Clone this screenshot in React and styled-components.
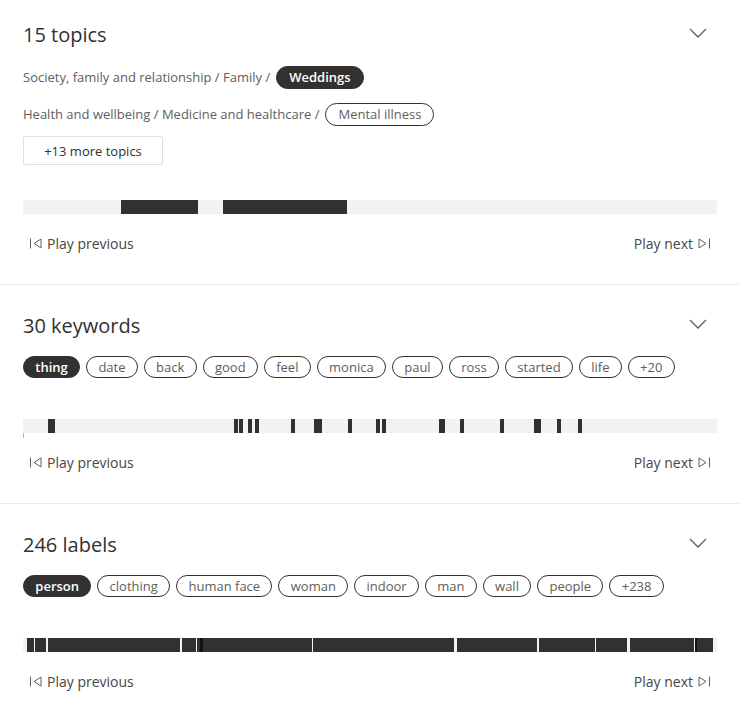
import React from "react";
import styled, { createGlobalStyle } from "styled-components";

const Global = createGlobalStyle`
  html, body { margin: 0; padding: 0; background: #fff; }
  body { font-family: "Open Sans", "Noto Sans", sans-serif; color: #323130; }
  * { box-sizing: border-box; }
`;

const Page = styled.div`
  width: 739px;
  display: flex;
  flex-direction: column;
`;

const Section = styled.section`
  padding: ${(p) => (p.$first ? "21px" : "27px")} 22px 26px 23px;
  border-top: ${(p) => (p.$first ? "none" : "1px solid #edebe9")};
  display: flex;
  flex-direction: column;
`;

const Header = styled.div`
  display: flex;
  align-items: center;
  justify-content: space-between;
  height: 28px;
`;

const Title = styled.h2`
  margin: 0;
  font-size: 20px;
  line-height: 28px;
  font-weight: 500;
  color: #323130;
`;

const ChevronButton = styled.button`
  border: none;
  background: none;
  padding: 0 0 4px;
  width: 28px;
  height: 28px;
  display: flex;
  align-items: center;
  justify-content: center;
  margin-right: 5px;
  cursor: pointer;
`;

const Crumb = styled.div`
  display: flex;
  align-items: center;
  gap: 6px;
  height: 24px;
  margin-top: ${(p) => p.$mt}px;
  font-size: 13px;
  color: #605e5c;
  white-space: nowrap;
`;

const ChipRow = styled.div`
  display: flex;
  gap: 6px;
  margin-top: 16px;
  height: 22px;
`;

const Chip = styled.span`
  display: inline-flex;
  align-items: center;
  justify-content: center;
  height: ${(p) => (p.$tall ? 23 : 22)}px;
  padding: 0 ${(p) => (p.$tall ? 12 : 11.3)}px;
  border-radius: 12px;
  font-size: 13px;
  border: 1px solid #323130;
  background: ${(p) => (p.$active ? "#323130" : "#fff")};
  color: ${(p) => (p.$active ? "#fff" : "#605e5c")};
  font-weight: ${(p) => (p.$active ? 600 : 400)};
  white-space: nowrap;
`;

const MoreButton = styled.button`
  margin-top: 10px;
  align-self: flex-start;
  width: 140px;
  height: 29px;
  border: 1px solid #e1dfdd;
  border-radius: 2px;
  background: #fff;
  font-family: inherit;
  font-size: 13px;
  color: #323130;
  padding: 0;
`;

const Track = styled.div`
  position: relative;
  height: 14px;
  background: #f3f2f1;
  margin-top: ${(p) => p.$mt}px;
`;

const Segment = styled.div`
  position: absolute;
  top: 0;
  bottom: 0;
  background: ${(p) => (p.$dark ? "#111" : "#323130")};
`;

const Cursor = styled.div`
  position: absolute;
  left: 0;
  top: 14px;
  width: 1px;
  height: 5px;
  background: #8fbfe8;
`;

const Controls = styled.div`
  display: flex;
  justify-content: space-between;
  align-items: center;
  margin-top: 14px;
  height: 30px;
`;

const PlayButton = styled.button`
  display: flex;
  align-items: center;
  gap: 5px;
  border: none;
  background: none;
  padding: 0 7px;
  height: 30px;
  font-family: inherit;
  font-size: 14px;
  color: #484644;
  cursor: pointer;
`;

const Chevron = () => (
  <svg width="18" height="10" viewBox="0 0 18 10">
    <polyline points="1,1 9,9 17,1" fill="none" stroke="#605e5c" strokeWidth="1.3" />
  </svg>
);

const PrevIcon = () => (
  <svg width="12" height="11" viewBox="0 0 12 11">
    <line x1="0.5" y1="0.5" x2="0.5" y2="10.5" stroke="#605e5c" strokeWidth="1" />
    <polygon points="11,1 11,10 4,5.5" fill="none" stroke="#605e5c" strokeWidth="1" />
  </svg>
);

const NextIcon = () => (
  <svg width="12" height="11" viewBox="0 0 12 11">
    <polygon points="1,1 1,10 8,5.5" fill="none" stroke="#605e5c" strokeWidth="1" />
    <line x1="11.5" y1="0.5" x2="11.5" y2="10.5" stroke="#605e5c" strokeWidth="1" />
  </svg>
);

const TRACK_W = 694;
const OFFSET = 23;

const Timeline = ({ segments, mt, cursor }) => (
  <Track $mt={mt}>
    {segments.map(([a, b, d], i) => (
      <Segment
        key={i}
        $dark={d}
        style={{ left: `${((a - OFFSET) / TRACK_W) * 100}%`, width: `${((b - a) / TRACK_W) * 100}%` }}
      />
    ))}
    {cursor && <Cursor />}
  </Track>
);

const PlayControls = () => (
  <Controls>
    <PlayButton>
      <PrevIcon />
      Play previous
    </PlayButton>
    <PlayButton>
      Play next
      <NextIcon />
    </PlayButton>
  </Controls>
);

const topicSegs = [
  [121, 198],
  [223, 347],
];

const keywordSegs = [
  [48, 55],
  [234, 238],
  [239, 243],
  [248, 252],
  [255, 259],
  [291, 295],
  [314, 322],
  [348, 352],
  [376, 380],
  [382, 386],
  [439, 445],
  [460, 464],
  [500, 504],
  [534, 541],
  [557, 561],
  [578, 582],
];

const labelSegs = [
  [27, 34],
  [35, 46],
  [48, 180],
  [182, 196],
  [197, 200],
  [200, 203, true],
  [203, 312],
  [313, 454],
  [457, 537],
  [539, 595],
  [596, 627],
  [630, 694],
  [695, 697, true],
  [697, 713],
];

const keywords = ["date", "back", "good", "feel", "monica", "paul", "ross", "started", "life", "+20"];
const labels = ["clothing", "human face", "woman", "indoor", "man", "wall", "people", "+238"];

const SectionHeader = ({ title }) => (
  <Header>
    <Title>{title}</Title>
    <ChevronButton aria-label="expand">
      <Chevron />
    </ChevronButton>
  </Header>
);

export default function App() {
  return (
    <>
      <Global />
      <Page>
        <Section $first>
          <SectionHeader title="15 topics" />
          <Crumb $mt={16}>
            Society, family and relationship / Family /<Chip $active $tall>Weddings</Chip>
          </Crumb>
          <Crumb $mt={13}>
            Health and wellbeing / Medicine and healthcare /<Chip $tall>Mental illness</Chip>
          </Crumb>
          <MoreButton>+13 more topics</MoreButton>
          <Timeline segments={topicSegs} mt={35} />
          <PlayControls />
        </Section>
        <Section>
          <SectionHeader title="30 keywords" />
          <ChipRow>
            <Chip $active>thing</Chip>
            {keywords.map((k) => (
              <Chip key={k}>{k}</Chip>
            ))}
          </ChipRow>
          <Timeline segments={keywordSegs} mt={41} cursor />
          <PlayControls />
        </Section>
        <Section>
          <SectionHeader title="246 labels" />
          <ChipRow>
            <Chip $active>person</Chip>
            {labels.map((k) => (
              <Chip key={k}>{k}</Chip>
            ))}
          </ChipRow>
          <Timeline segments={labelSegs} mt={41} />
          <PlayControls />
        </Section>
      </Page>
    </>
  );
}
